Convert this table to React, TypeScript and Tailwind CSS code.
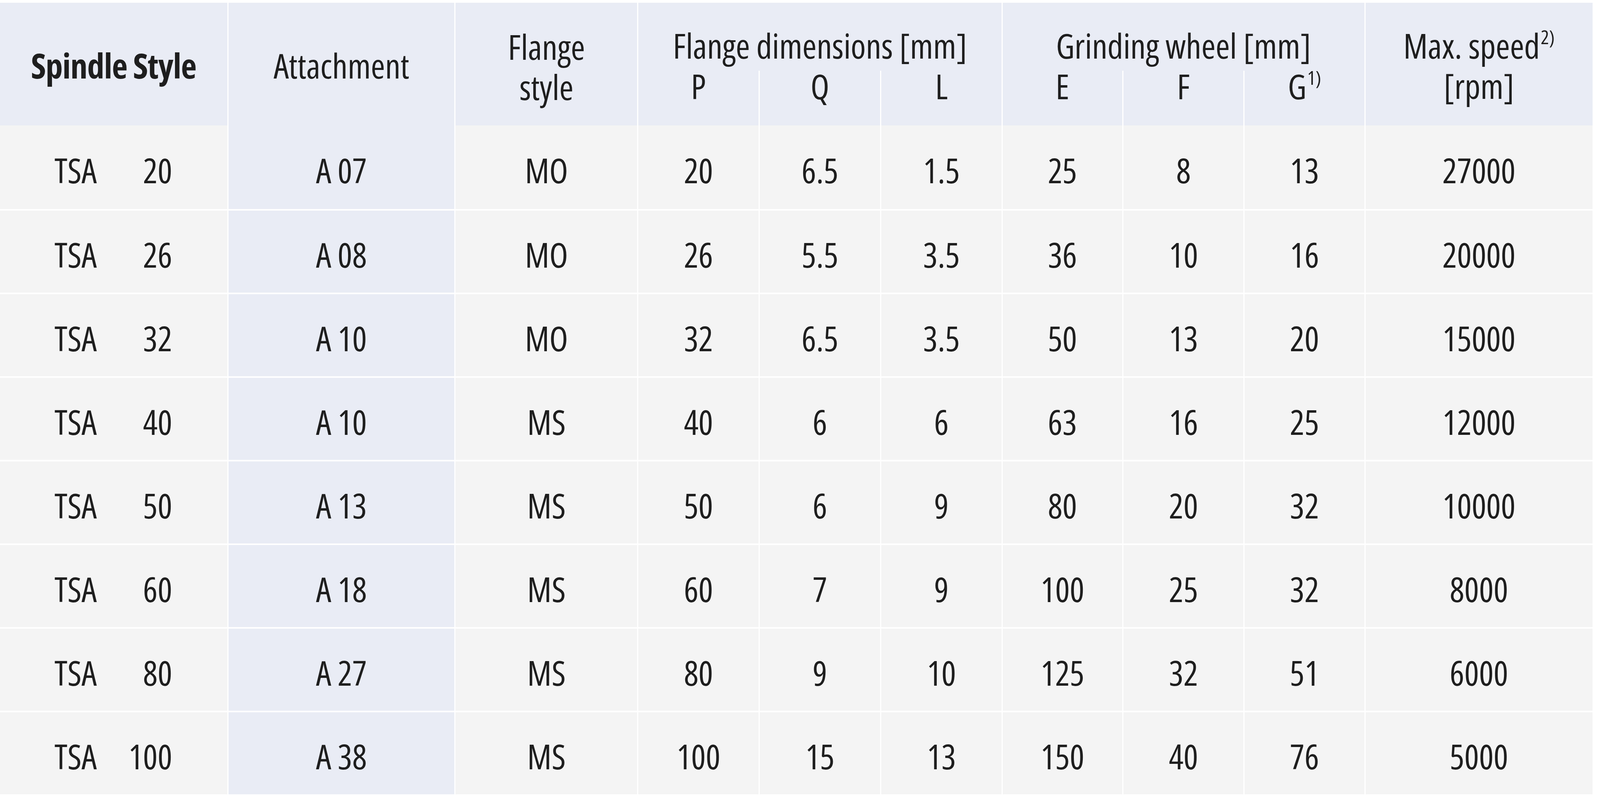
const ROWS: string[][] = [
  ['20', 'A 07', 'MO', '20', '6.5', '1.5', '25', '8', '13', '27000'],
  ['26', 'A 08', 'MO', '26', '5.5', '3.5', '36', '10', '16', '20000'],
  ['32', 'A 10', 'MO', '32', '6.5', '3.5', '50', '13', '20', '15000'],
  ['40', 'A 10', 'MS', '40', '6', '6', '63', '16', '25', '12000'],
  ['50', 'A 13', 'MS', '50', '6', '9', '80', '20', '32', '10000'],
  ['60', 'A 18', 'MS', '60', '7', '9', '100', '25', '32', '8000'],
  ['80', 'A 27', 'MS', '80', '9', '10', '125', '32', '51', '6000'],
  ['100', 'A 38', 'MS', '100', '15', '13', '150', '40', '76', '5000'],
]

// column proportions taken from the printed table
const COLS = 'grid grid-cols-[722fr_722fr_581fr_385fr_387fr_385fr_384fr_385fr_384fr_725fr]'
const SEP = 'border-l-[3px] border-white'

function Sup({ children }: { children: string }) {
  return <sup className="text-[50px] top-[-0.75em] ml-[2px]">{children}</sup>
}

export default function App() {
  return (
    <div className="bg-white w-full h-[2045px] pt-[7px] font-['Open_Sans',sans-serif] font-stretch-[75%] text-[88px] text-[#1e1e1e] whitespace-nowrap">
      <div className="w-[99.53%]">
        {/* header */}
        <div className={`${COLS} grid-rows-[174px_140px] bg-[#e9ecf5]`}>
          <div className="row-span-2 min-w-0 flex items-center justify-center pt-[6px] font-bold tracking-[-1px]">
            Spindle Style
          </div>
          <div className={`row-span-2 min-w-0 ${SEP} flex items-center justify-center pt-[6px]`}>
            Attachment
          </div>
          <div className={`row-span-2 min-w-0 ${SEP} flex items-center justify-center text-center leading-[103px] pt-[14px]`}>
            Flange<br />style
          </div>
          <div className={`col-span-3 min-w-0 ${SEP} pt-[58px] leading-[103px] text-center`}>Flange dimensions [mm]</div>
          <div className={`col-span-3 min-w-0 ${SEP} pt-[58px] leading-[103px] text-center`}>Grinding wheel [mm]</div>
          <div className={`row-span-2 min-w-0 ${SEP} pt-[58px] leading-[103px] text-center`}>
            Max. speed<Sup>2)</Sup><br />[rpm]
          </div>
          {['P', 'Q', 'L', 'E', 'F'].map((h) => (
            <div key={h} className={`min-w-0 ${SEP} pt-[9px] leading-[60px] text-center`}>{h}</div>
          ))}
          <div className={`min-w-0 ${SEP} pt-[9px] leading-[60px] text-center`}>
            G<Sup>1)</Sup>
          </div>
        </div>

        {/* body */}
        {ROWS.map((r, i) => (
          <div key={i} className={`${COLS} h-[214px] bg-[#f4f4f4] ${i > 0 ? 'border-t-4 border-white' : ''}`}>
            <div className="min-w-0 flex items-center pt-[14px]">
              <div className="w-[75.8%] pl-[24%] flex justify-between">
                <span>TSA</span>
                <span>{r[0]}</span>
              </div>
            </div>
            {r.slice(1).map((v, j) => (
              <div
                key={j}
                className={`min-w-0 ${SEP} flex items-center justify-center pt-[14px] ${j === 0 ? 'bg-[#e9ecf5]' : ''}`}
              >
                {v}
              </div>
            ))}
          </div>
        ))}
      </div>
    </div>
  )
}
